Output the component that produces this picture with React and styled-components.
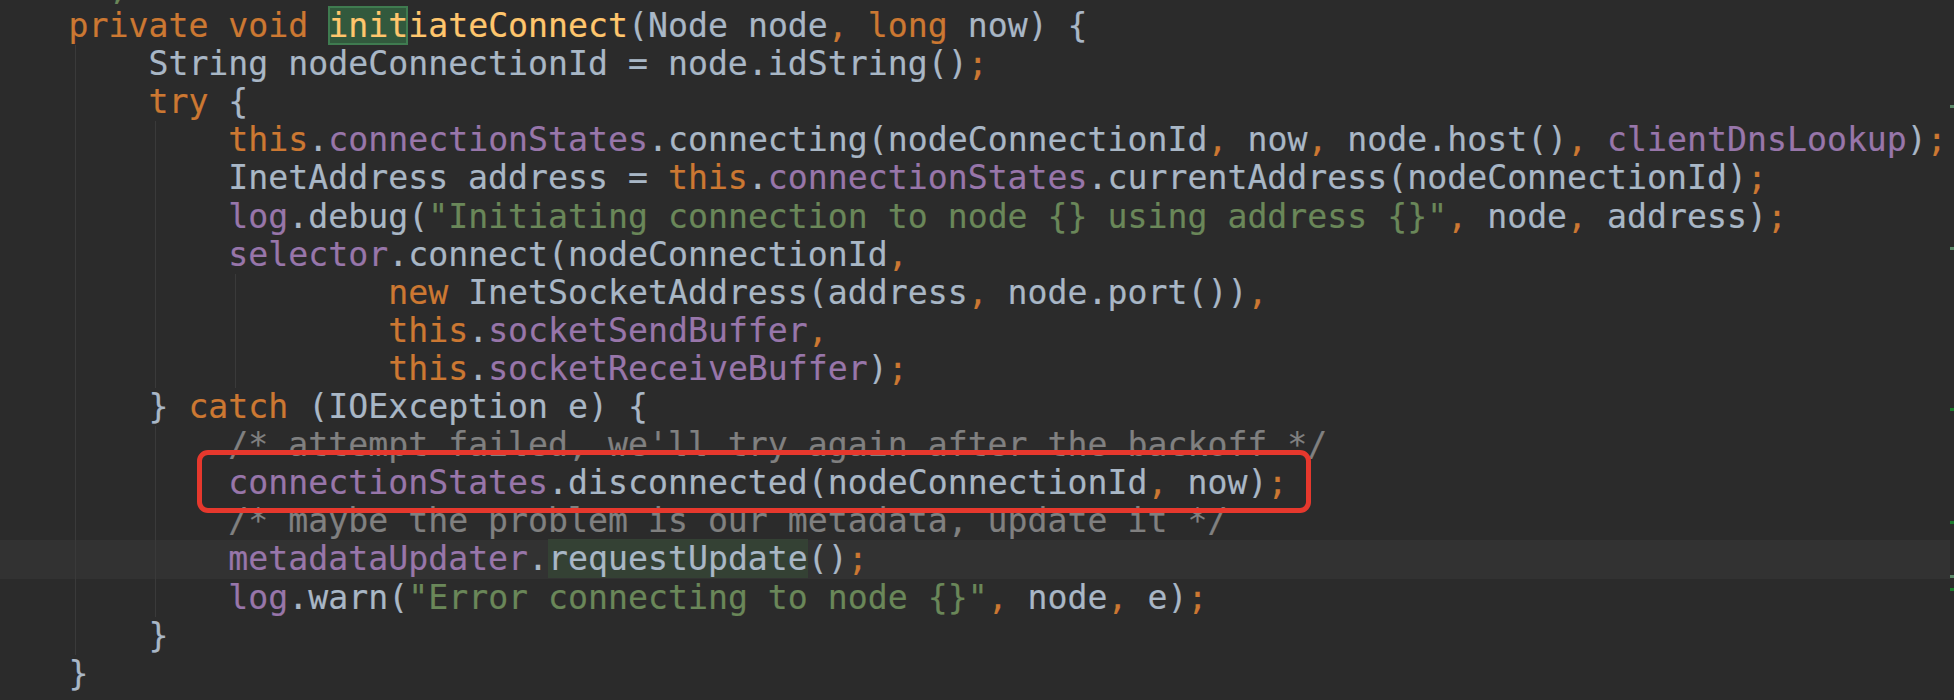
import React from 'react';
import styled, { createGlobalStyle } from 'styled-components';

const GlobalStyle = createGlobalStyle`
  html, body {
    margin: 0;
    padding: 0;
    background: #2b2b2b;
  }
  body {
    overflow: hidden;
  }
`;

// darcula-ish token colours
const COLORS = {
  d: '#a9b7c6',
  k: '#cc7832',
  f: '#9876aa',
  s: '#6a8759',
  c: '#808080',
  m: '#ffc66d',
};

const GUIDE_X = [75, 155, 235];

const Editor = styled.div`
  display: flex;
  width: 1954px;
  height: 700px;
  overflow: hidden;
  background: #2b2b2b;
  font-family: "DejaVu Sans Mono", "Liberation Mono", monospace;
  font-size: 33.2px;
  -webkit-text-stroke: 0.2px currentColor;
`;

const Code = styled.div`
  flex: 1;
  margin-top: -31px;
`;

const Line = styled.div`
  position: relative;
  height: 38.1px;
  line-height: 38.1px;
  padding-left: 68.5px;
  white-space: pre;
  color: ${COLORS.d};
  background-color: ${(p) => (p.$current ? '#323232' : 'transparent')};
  background-image: ${(p) => (p.$guides.length
    ? p.$guides.map(() => 'linear-gradient(#3a3a3a, #3a3a3a)').join(', ')
    : 'none')};
  background-size: 1px 100%;
  background-repeat: no-repeat;
  background-position: ${(p) => (p.$guides.length
    ? p.$guides.map((g) => `${GUIDE_X[g]}px 0`).join(', ')
    : '0 0')};
`;

const Tok = styled.span`
  color: ${(p) => COLORS[p.$t]};
`;

const Match = styled.span`
  color: ${COLORS.m};
  background: #32593d;
  box-shadow: inset 0 0 0 2px #3f7b50;
`;

const Usage = styled.span`
  background: #344134;
`;

const RedBox = styled.div`
  position: absolute;
  left: 197px;
  top: -14px;
  width: 1114px;
  height: 63px;
  box-sizing: border-box;
  border: 5px solid #e6382d;
  border-radius: 11px;
  z-index: 2;
  pointer-events: none;
`;

const Stripe = styled.div`
  position: relative;
  flex: none;
  width: 4px;
`;

const Mark = styled.div`
  position: absolute;
  left: 0;
  width: 4px;
  height: 3px;
  top: ${(p) => p.$y}px;
  background: ${(p) => (p.$dark ? '#1c7a2d' : '#5d8a6a')};
`;

const I1 = '    ';
const I2 = '        ';
const I4 = '                ';

const LINES = [
  { g: [], t: [['d', '  '], ['s', ',']] },
  {
    g: [],
    t: [['k', 'private'], ['d', ' '], ['k', 'void'], ['d', ' '], ['h', 'init'], ['m', 'iateConnect'],
      ['d', '(Node node'], ['k', ','], ['d', ' '], ['k', 'long'], ['d', ' now) {']],
  },
  { g: [0], t: [['d', `${I1}String nodeConnectionId = node.idString()`], ['k', ';']] },
  { g: [0], t: [['d', I1], ['k', 'try'], ['d', ' {']] },
  {
    g: [0, 1],
    t: [['d', I2], ['k', 'this'], ['d', '.'], ['f', 'connectionStates'], ['d', '.connecting(nodeConnectionId'],
      ['k', ','], ['d', ' now'], ['k', ','], ['d', ' node.host()'], ['k', ','], ['d', ' '],
      ['f', 'clientDnsLookup'], ['d', ')'], ['k', ';']],
  },
  {
    g: [0, 1],
    t: [['d', `${I2}InetAddress address = `], ['k', 'this'], ['d', '.'], ['f', 'connectionStates'],
      ['d', '.currentAddress(nodeConnectionId)'], ['k', ';']],
  },
  {
    g: [0, 1],
    t: [['d', I2], ['f', 'log'], ['d', '.debug('], ['s', '"Initiating connection to node {} using address {}"'],
      ['k', ','], ['d', ' node'], ['k', ','], ['d', ' address)'], ['k', ';']],
  },
  { g: [0, 1], t: [['d', I2], ['f', 'selector'], ['d', '.connect(nodeConnectionId'], ['k', ',']] },
  {
    g: [0, 1, 2],
    t: [['d', I4], ['k', 'new'], ['d', ' InetSocketAddress(address'], ['k', ','], ['d', ' node.port())'], ['k', ',']],
  },
  { g: [0, 1, 2], t: [['d', I4], ['k', 'this'], ['d', '.'], ['f', 'socketSendBuffer'], ['k', ',']] },
  { g: [0, 1, 2], t: [['d', I4], ['k', 'this'], ['d', '.'], ['f', 'socketReceiveBuffer'], ['d', ')'], ['k', ';']] },
  { g: [0], t: [['d', `${I1}} `], ['k', 'catch'], ['d', ' (IOException e) {']] },
  { g: [0, 1], t: [['d', I2], ['c', "/* attempt failed, we'll try again after the backoff */"]] },
  {
    g: [0, 1],
    boxed: true,
    t: [['d', I2], ['f', 'connectionStates'], ['d', '.disconnected(nodeConnectionId'], ['k', ','],
      ['d', ' now)'], ['k', ';']],
  },
  { g: [0, 1], t: [['d', I2], ['c', '/* maybe the problem is our metadata, update it */']] },
  {
    g: [0, 1],
    current: true,
    t: [['d', I2], ['f', 'metadataUpdater'], ['d', '.'], ['u', 'requestUpdate'], ['d', '()'], ['k', ';']],
  },
  {
    g: [0, 1],
    t: [['d', I2], ['f', 'log'], ['d', '.warn('], ['s', '"Error connecting to node {}"'], ['k', ','],
      ['d', ' node'], ['k', ','], ['d', ' e)'], ['k', ';']],
  },
  { g: [0], t: [['d', `${I1}}`]] },
  { g: [], t: [['d', '}']] },
];

const MARKS = [
  { y: 105, dark: false },
  { y: 247, dark: false },
  { y: 408, dark: true },
  { y: 521, dark: true },
  { y: 575, dark: false },
  { y: 588, dark: true },
];

const renderToken = ([type, text], i) => {
  if (type === 'h') return <Match key={i}>{text}</Match>;
  if (type === 'u') return <Usage key={i}>{text}</Usage>;
  return <Tok key={i} $t={type}>{text}</Tok>;
};

const App = () => (
  <>
    <GlobalStyle />
    <Editor>
      <Code>
        {LINES.map((line, index) => (
          <Line key={index.toString()} $guides={line.g} $current={line.current}>
            {line.t.map(renderToken)}
            {line.boxed && <RedBox />}
          </Line>
        ))}
      </Code>
      <Stripe>
        {MARKS.map((mark) => (
          <Mark key={mark.y} $y={mark.y} $dark={mark.dark} />
        ))}
      </Stripe>
    </Editor>
  </>
);

export default App;
